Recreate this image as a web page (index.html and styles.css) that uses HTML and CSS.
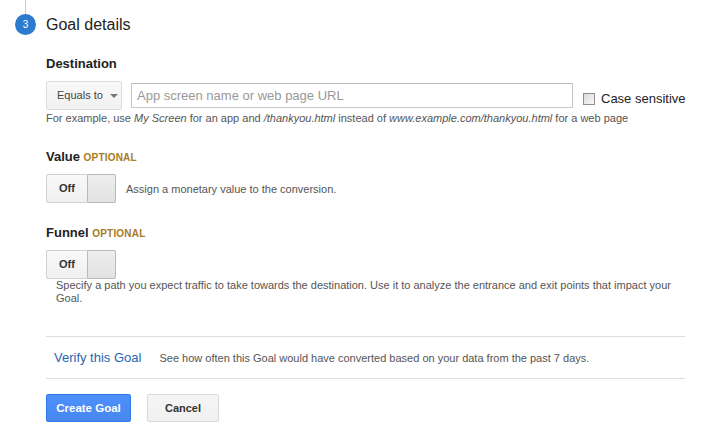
FILE: index.html
```html
<!DOCTYPE html>
<html>
<head>
<meta charset="utf-8">
<link rel="stylesheet" href="styles.css">
</head>
<body>
<div class="page">
  <div class="header">
    <div class="step-col">
      <div class="step-line"></div>
      <div class="step-num">3</div>
    </div>
    <div class="title">Goal details</div>
  </div>

  <div class="content">
    <div class="label label-dest">Destination</div>
    <div class="dest-row">
      <div class="select">Equals to <span class="caret"></span></div>
      <div class="input">App screen name or web page URL</div>
      <label class="check"><span class="box"></span>Case sensitive</label>
    </div>
    <div class="help">For example, use <i>My Screen</i> for an app and <i>/thankyou.html</i> instead of <i>www.example.com/thankyou.html</i> for a web page</div>

    <div class="label label-value">Value <span class="opt">OPTIONAL</span></div>
    <div class="toggle-row">
      <div class="toggle"><span class="toggle-off">Off</span><span class="toggle-knob"></span></div>
      <div class="toggle-desc">Assign a monetary value to the conversion.</div>
    </div>

    <div class="label label-funnel">Funnel <span class="opt">OPTIONAL</span></div>
    <div class="toggle-row toggle-row-funnel">
      <div class="toggle"><span class="toggle-off">Off</span><span class="toggle-knob"></span></div>
    </div>
    <div class="funnel-desc">Specify a path you expect traffic to take towards the destination. Use it to analyze the entrance and exit points that impact your Goal.</div>

    <div class="verify">
      <a class="verify-link">Verify this Goal</a>
      <span class="verify-desc">See how often this Goal would have converted based on your data from the past 7 days.</span>
    </div>

    <div class="actions">
      <button class="btn btn-primary">Create Goal</button>
      <button class="btn btn-default">Cancel</button>
    </div>
  </div>
</div>
</body>
</html>
```

FILE: styles.css
```css
html, body {
  margin: 0;
  padding: 0;
  background: #ffffff;
}
body {
  font-family: "Liberation Sans", Arial, sans-serif;
  color: #222222;
  width: 708px;
  height: 440px;
  overflow: hidden;
}
.header {
  display: flex;
  align-items: flex-end;
  padding-left: 15px;
  height: 35px;
}
.step-col {
  display: flex;
  flex-direction: column;
  align-items: center;
  width: 21px;
}
.step-line {
  width: 1px;
  height: 14px;
  background: #cccccc;
}
.step-num {
  width: 21px;
  height: 21px;
  border-radius: 50%;
  background: #2c7bd1;
  color: #ffffff;
  font-size: 10px;
  line-height: 21px;
  text-align: center;
}
.title {
  margin-left: 10px;
  font-size: 16px;
  line-height: 21px;
  color: #222222;
}
.content {
  margin-left: 46px;
  width: 639px;
}
.label {
  font-size: 13px;
  font-weight: bold;
  line-height: 16px;
  color: #222222;
}
.label-dest { margin-top: 21px; }
.label-value { margin-top: 24px; }
.label-funnel { margin-top: 22px; }
.opt {
  font-size: 10px;
  color: #a87b1e;
  letter-spacing: 0.2px;
}
.dest-row {
  display: flex;
  align-items: center;
  margin-top: 9px;
  height: 29px;
}
.select {
  box-sizing: border-box;
  flex-shrink: 0;
  width: 76px;
  height: 29px;
  border: 1px solid #dcdcdc;
  border-radius: 2px;
  background: linear-gradient(#f8f8f8, #f1f1f1);
  font-size: 11px;
  color: #444444;
  line-height: 27px;
  padding-left: 10px;
  display: flex;
  align-items: center;
  white-space: nowrap;
}
.caret {
  width: 0;
  height: 0;
  border-left: 4px solid transparent;
  border-right: 4px solid transparent;
  border-top: 4px solid #777777;
  margin-left: 7px;
}
.input {
  box-sizing: border-box;
  flex-shrink: 0;
  margin-left: 9px;
  width: 442px;
  height: 25px;
  border: 1px solid #c8c8c8;
  border-top-color: #bcbcbc;
  padding-left: 5px;
  font-size: 13px;
  line-height: 23px;
  color: #999999;
}
.check {
  display: flex;
  align-items: center;
  flex-shrink: 0;
  white-space: nowrap;
  margin-left: 10px;
  font-size: 13px;
  color: #222222;
  margin-top: 6px;
}
.box {
  box-sizing: border-box;
  width: 12px;
  height: 12px;
  border: 1px solid #8f8f8f;
  background: linear-gradient(135deg, #dcdcdc, #f5f5f5);
  margin-right: 6px;
}
.help {
  margin-top: 1px;
  font-size: 11px;
  line-height: 14px;
  color: #555555;
}
.toggle-row {
  display: flex;
  align-items: center;
  margin-top: 8px;
}
.toggle-row-funnel { margin-top: 8px; }
.toggle {
  box-sizing: border-box;
  display: flex;
  width: 70px;
  height: 29px;
  border: 1px solid #d0d0d0;
  border-radius: 2px;
  background: linear-gradient(#f9f9f9, #f0f0f0);
}
.toggle-off {
  width: 40px;
  text-align: center;
  font-size: 11px;
  font-weight: bold;
  line-height: 27px;
  color: #333333;
}
.toggle-knob {
  flex: 1;
  margin: -1px -1px -1px 0;
  border: 1px solid #b9b9b9;
  border-radius: 2px;
  background: linear-gradient(#eeeeee, #e2e2e2);
}
.toggle-desc {
  margin-left: 10px;
  font-size: 11px;
  color: #555555;
}
.funnel-desc {
  margin-left: 10px;
  margin-top: 0;
  width: 630px;
  font-size: 11px;
  line-height: 13px;
  color: #555555;
}
.verify {
  margin-top: 31px;
  border-top: 1px solid #dddddd;
  border-bottom: 1px solid #dddddd;
  height: 41px;
  display: flex;
  align-items: center;
  padding-left: 8px;
}
.verify-link {
  font-size: 13px;
  color: #1f66b3;
}
.verify-desc {
  margin-left: 18px;
  font-size: 11px;
  color: #555555;
}
.actions {
  display: flex;
  gap: 16px;
  margin-top: 15px;
}
.btn {
  box-sizing: border-box;
  height: 28px;
  border-radius: 2px;
  font-family: "Liberation Sans", Arial, sans-serif;
  font-size: 11px;
  font-weight: bold;
  padding: 0;
}
.btn-primary {
  width: 85px;
  font-size: 11.5px;
  background: linear-gradient(#4d90fe, #4787ed);
  border: 1px solid #3079ed;
  color: #ffffff;
}
.btn-default {
  width: 72px;
  background: linear-gradient(#f5f5f5, #f1f1f1);
  border: 1px solid #d9d9d9;
  color: #333333;
}
```
